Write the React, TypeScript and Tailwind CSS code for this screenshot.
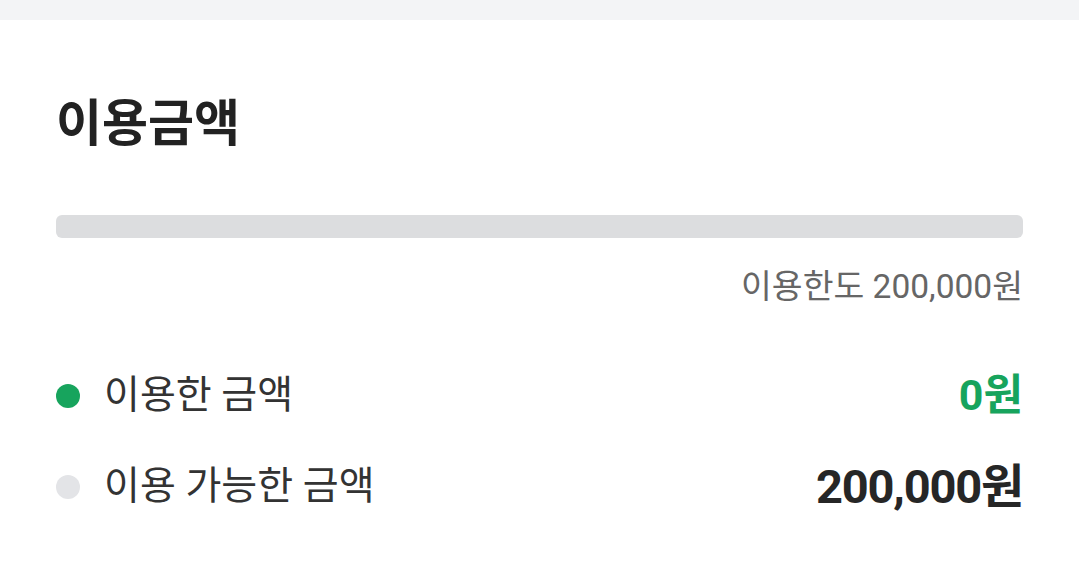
import React from "react";

const FONT = { fontFamily: "Roboto, 'Noto Sans CJK KR', sans-serif" };

function Row({ dot, label, value, valueClass }: { dot: string; label: string; value: string; valueClass: string }) {
  return (
    <div className="flex items-center justify-between h-[60px]">
      <div className="flex items-center">
        <span className={`w-[24px] h-[24px] rounded-full ${dot}`} />
        <span className="ml-[24px] text-[39px] leading-none text-[#333333]">{label}</span>
      </div>
      <span className={`leading-none font-bold ${valueClass}`}>{value}</span>
    </div>
  );
}

export default function App() {
  return (
    <div className="w-[1079px] h-[561px] bg-white overflow-hidden" style={FONT}>
      <div className="h-[20px] bg-[#f3f4f6]" />
      <div className="px-[56px]">
        <h1 className="pt-[79px] text-[50px] leading-none font-bold text-[#222222]">이용금액</h1>
        <div className="mt-[66px] h-[23px] rounded-[6px] bg-[#dcdddf]" />
        <div className="mt-[32px] text-right text-[33.5px] leading-none text-[#666666]">이용한도 200,000원</div>
        <div className="mt-[62px] flex flex-col gap-[31px]">
          <Row dot="bg-[#17a45d]" label="이용한 금액" value="0원" valueClass="text-[43px] text-[#17a45d]" />
          <Row dot="bg-[#e3e4e7]" label="이용 가능한 금액" value="200,000원" valueClass="text-[47px] tracking-[-1.2px] text-[#262626]" />
        </div>
      </div>
    </div>
  );
}
